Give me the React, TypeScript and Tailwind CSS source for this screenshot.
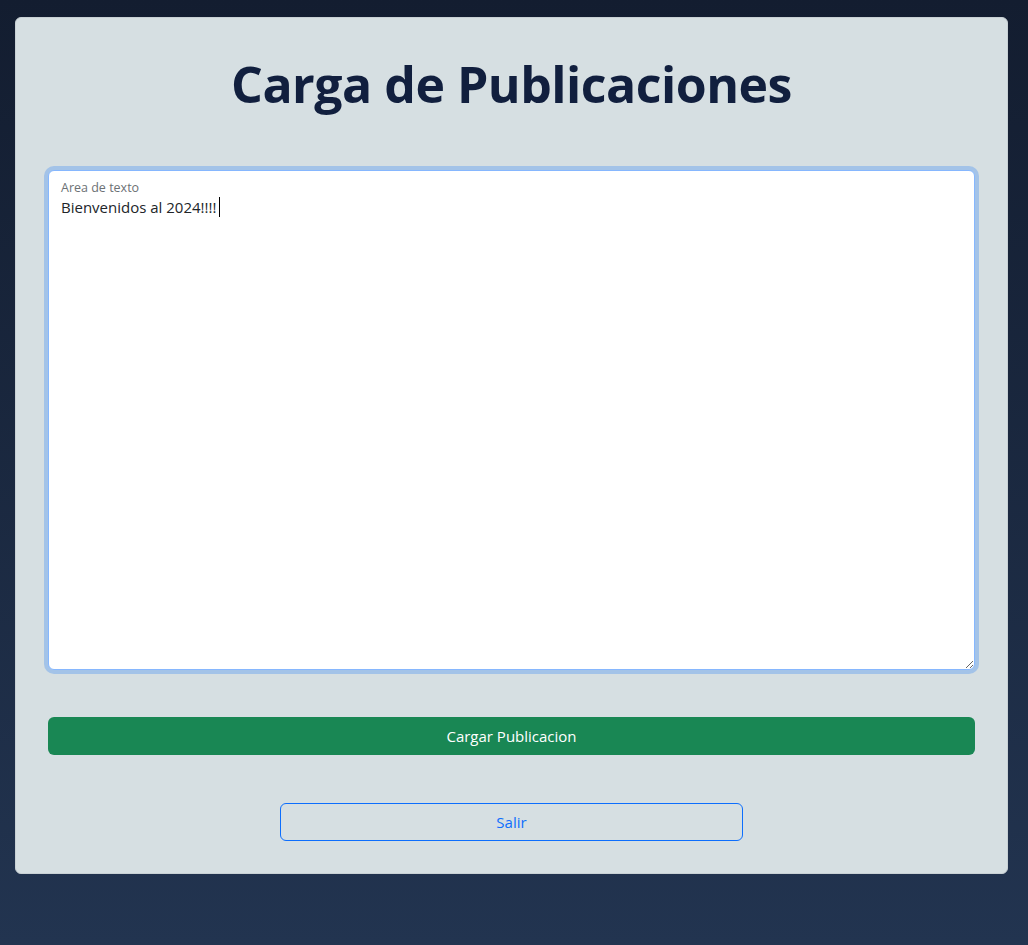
import React from "react";

export default function App() {
  return (
    <div
      className="min-h-[945px] w-full bg-gradient-to-b from-[#131d30] to-[#223450] pt-[17px] px-[15px]"
      style={{ fontFamily: '"Open Sans", "Noto Sans", sans-serif' }}
    >
      <div className="w-[993px] rounded-[6px] bg-[#d6dfe2] border border-[#c8d0d4] px-[32px] pt-[32px] pb-[32px]">
        <h1 className="text-center text-[50px] font-bold leading-[60px] text-[#111f3e] mt-[4px] mb-[56px] tracking-[-0.5px]">
          Carga de Publicaciones
        </h1>
        <div className="relative">
          <textarea
            defaultValue="Bienvenidos al 2024!!!!"
            className="block w-full h-[500px] rounded-[6px] bg-white border border-[#86b7fe] shadow-[0_0_0_4px_rgba(13,110,253,0.25)] pl-[12px] pr-[12px] pt-[24px] text-[15px] leading-[24px] text-[#212529] outline-none resize-y"
          />
          <span className="absolute left-[13px] top-[9px] text-[12.5px] text-[#6c7175] pointer-events-none">
            Area de texto
          </span>
          <span className="absolute left-[171px] top-[27px] h-[20px] w-px bg-black pointer-events-none" />
        </div>
        <button className="mt-[47px] block w-full h-[38px] rounded-[6px] bg-[#198754] text-white text-[15px]">
          Cargar Publicacion
        </button>
        <div className="mt-[48px] flex justify-center">
          <button className="w-[463px] h-[38px] rounded-[6px] border border-[#0d6efd] text-[#0d6efd] text-[15px]">
            Salir
          </button>
        </div>
      </div>
    </div>
  );
}
